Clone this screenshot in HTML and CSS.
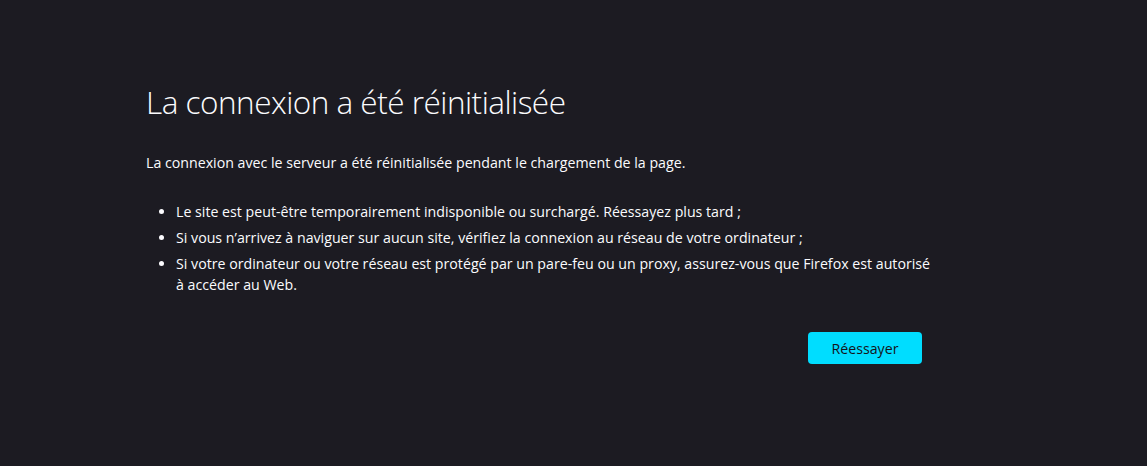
FILE: index.html
```html
<!DOCTYPE html>
<html lang="fr">
<head>
<meta charset="utf-8">
<link rel="stylesheet" href="styles.css">
<title>Problème de chargement de la page</title>
</head>
<body>
<main class="container">
  <h1 class="title">La connexion a été réinitialisée</h1>
  <p class="lead">La connexion avec le serveur a été réinitialisée pendant le chargement de la page.</p>
  <ul class="tips">
    <li>Le site est peut-être temporairement indisponible ou surchargé. Réessayez plus tard ;</li>
    <li>Si vous n’arrivez à naviguer sur aucun site, vérifiez la connexion au réseau de votre ordinateur ;</li>
    <li>Si votre ordinateur ou votre réseau est protégé par un pare-feu ou un proxy, assurez-vous que Firefox est autorisé à accéder au Web.</li>
  </ul>
  <div class="actions">
    <button class="retry">Réessayer</button>
  </div>
</main>
</body>
</html>
```
FILE: styles.css
```css
html, body {
  margin: 0;
  height: 100%;
}
body {
  background: #1c1b22;
  color: #fbfbfe;
  font-family: "Open Sans", "Noto Sans", sans-serif;
  font-size: 14.2px;
}
.container {
  width: 776px;
  padding: 79px 0 0 146px;
}
.title {
  margin: 0;
  font-weight: 300;
  font-size: 31.5px;
  line-height: 46px;
  letter-spacing: -0.5px;
}
.lead {
  margin: 27px 0 0;
  line-height: 21px;
}
.tips {
  margin: 28px -14px 0 0;
  padding-left: 30px;
}
.tips li {
  line-height: 21px;
  margin-bottom: 5px;
}
.tips li:last-child {
  margin-bottom: 0;
}
.actions {
  display: flex;
  justify-content: flex-end;
  margin-top: 37px;
}
.retry {
  width: 114px;
  height: 32px;
  border: none;
  border-radius: 4px;
  background: #00ddff;
  color: #15141a;
  font-family: inherit;
  font-size: 14.2px;
}
```
